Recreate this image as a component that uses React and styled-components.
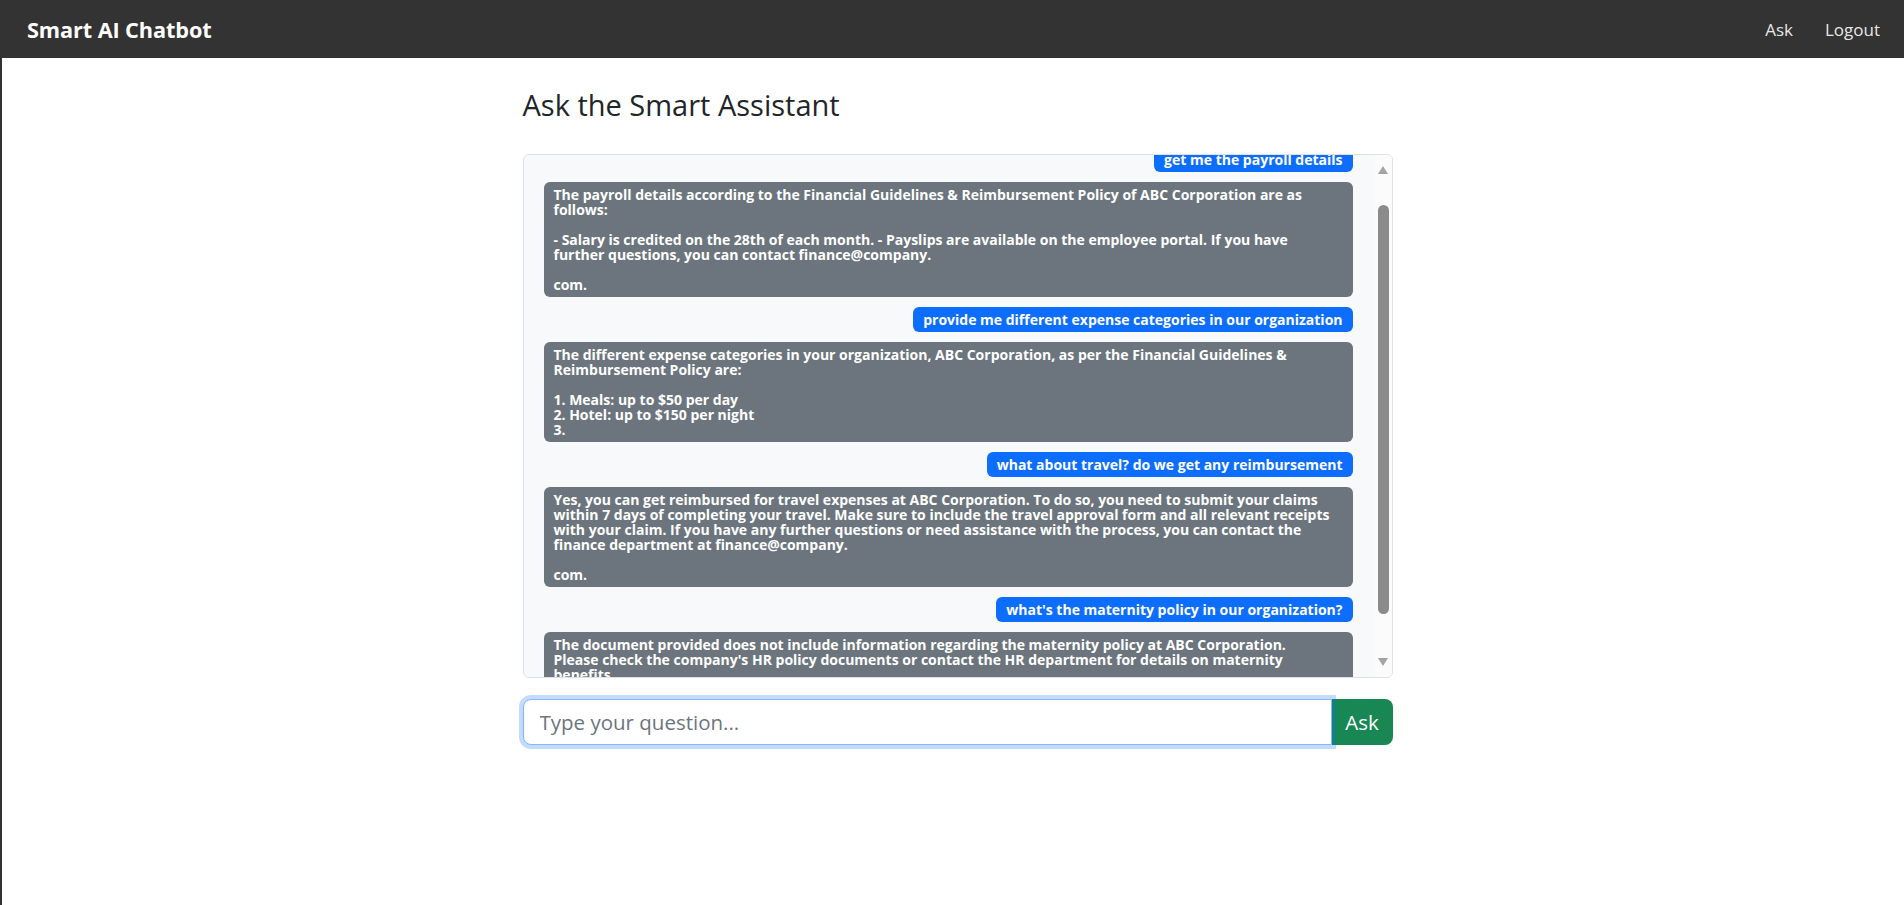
import React, { useLayoutEffect, useRef } from "react";
import styled, { createGlobalStyle } from "styled-components";

const Global = createGlobalStyle`
  html, body { margin: 0; padding: 0; background: #fff; }
  body {
    font-family: "Open Sans", "Noto Sans", sans-serif;
    color: #212529;
  }
  * { box-sizing: border-box; }
`;

const Page = styled.div`
  min-height: 100vh;
  border-left: 2px solid #333;
`;

const NavBar = styled.nav`
  height: 58px;
  background: #333333;
  display: flex;
  align-items: center;
  justify-content: space-between;
  padding: 0 24px 0 25px;
`;

const Brand = styled.a`
  font-family: "Open Sans", sans-serif;
  font-weight: 700;
  font-size: 21.7px;
  color: #fff;
  text-decoration: none;
  letter-spacing: -0.1px;
`;

const NavLinks = styled.div`
  display: flex;
  align-items: center;
  gap: 32px;
`;

const NavLink = styled.a`
  font-size: 17px;
  color: rgba(255, 255, 255, 0.9);
  text-decoration: none;
`;

const Main = styled.main`
  padding-left: 9px;
`;

const Container = styled.div`
  width: 870px;
  margin: 0 auto;
  padding-top: 30px;
`;

const Title = styled.h3`
  margin: 0 0 31px;
  font-size: 29px;
  font-weight: 500;
  line-height: 1.2;
  color: #212529;
`;

const ChatBox = styled.div`
  height: 524px;
  border: 1px solid #dee2e6;
  border-radius: 6px;
  background: #f8f9fa;
  display: flex;
  overflow: hidden;
`;

const Messages = styled.div`
  flex: 1;
  overflow: hidden;
  padding: 12px 22px 12px 20px;
  display: flex;
  flex-direction: column;
  gap: 10px;
`;

const Bubble = styled.div`
  align-self: ${(p) => (p.$user ? "flex-end" : "stretch")};
  background: ${(p) => (p.$user ? "#0d6efd" : "#6c757d")};
  color: #fff;
  font-weight: 700;
  font-size: 14px;
  line-height: 15px;
  padding: 5px 10px;
  border-radius: 6px;
  white-space: pre-wrap;
  flex-shrink: 0;
`;

const ScrollBar = styled.div`
  width: 17px;
  flex-shrink: 0;
  background: #fbfbfb;
  display: flex;
  flex-direction: column;
  align-items: center;
`;

const ArrowBtn = styled.div`
  height: 30px;
  width: 100%;
  display: flex;
  align-items: center;
  justify-content: center;
`;

const Triangle = styled.span`
  width: 0;
  height: 0;
  border-left: 5px solid transparent;
  border-right: 5px solid transparent;
  ${(p) =>
    p.$down
      ? "border-top: 8px solid #a3a3a3;"
      : "border-bottom: 8px solid #a3a3a3;"}
`;

const Track = styled.div`
  flex: 1;
  width: 100%;
  display: flex;
  justify-content: center;
`;

const Thumb = styled.div`
  margin-top: 20px;
  width: 11px;
  height: 409px;
  border-radius: 6px;
  background: #8b8b8b;
`;

const InputGroup = styled.form`
  margin-top: 21px;
  display: flex;
  height: 46px;
`;

const Input = styled.input`
  flex: 1;
  position: relative;
  z-index: 1;
  border: 1px solid #86b7fe;
  border-radius: 8px 0 0 8px;
  box-shadow: 0 0 0 4px rgba(13, 110, 253, 0.25);
  padding: 0 16px;
  font-family: "Open Sans", sans-serif;
  font-size: 20.5px;
  color: #212529;
  outline: none;
  background: #fff;
  &::placeholder {
    color: #6c757d;
  }
`;

const AskButton = styled.button`
  width: 61px;
  border: none;
  border-radius: 0 8px 8px 0;
  background: #198754;
  color: #fff;
  font-family: "Open Sans", sans-serif;
  font-size: 20.5px;
  padding: 0;
  cursor: pointer;
`;

const messages = [
  { user: true, text: "get me the payroll details" },
  {
    user: false,
    text:
      "The payroll details according to the Financial Guidelines & Reimbursement Policy of ABC Corporation are as\nfollows:\n\n- Salary is credited on the 28th of each month. - Payslips are available on the employee portal. If you have\nfurther questions, you can contact finance@company.\n\ncom.",
  },
  { user: true, text: "provide me different expense categories in our organization" },
  {
    user: false,
    text:
      "The different expense categories in your organization, ABC Corporation, as per the Financial Guidelines &\nReimbursement Policy are:\n\n1. Meals: up to $50 per day\n2. Hotel: up to $150 per night\n3.",
  },
  { user: true, text: "what about travel? do we get any reimbursement" },
  {
    user: false,
    text:
      "Yes, you can get reimbursed for travel expenses at ABC Corporation. To do so, you need to submit your claims\nwithin 7 days of completing your travel. Make sure to include the travel approval form and all relevant receipts\nwith your claim. If you have any further questions or need assistance with the process, you can contact the\nfinance department at finance@company.\n\ncom.",
  },
  { user: true, text: "what's the maternity policy in our organization?" },
  {
    user: false,
    text:
      "The document provided does not include information regarding the maternity policy at ABC Corporation.\nPlease check the company's HR policy documents or contact the HR department for details on maternity\nbenefits.",
  },
];

export default function App() {
  const listRef = useRef(null);

  useLayoutEffect(() => {
    if (listRef.current) listRef.current.scrollTop = 20;
  }, []);

  return (
    <Page>
      <Global />
      <NavBar>
        <Brand href="#">Smart AI Chatbot</Brand>
        <NavLinks>
          <NavLink href="#">Ask</NavLink>
          <NavLink href="#">Logout</NavLink>
        </NavLinks>
      </NavBar>
      <Main>
        <Container>
          <Title>Ask the Smart Assistant</Title>
          <ChatBox>
            <Messages ref={listRef}>
              {messages.map((m, i) => (
                <Bubble key={i} $user={m.user}>
                  {m.text}
                </Bubble>
              ))}
            </Messages>
            <ScrollBar>
              <ArrowBtn>
                <Triangle />
              </ArrowBtn>
              <Track>
                <Thumb />
              </Track>
              <ArrowBtn>
                <Triangle $down />
              </ArrowBtn>
            </ScrollBar>
          </ChatBox>
          <InputGroup onSubmit={(e) => e.preventDefault()}>
            <Input placeholder="Type your question..." />
            <AskButton type="submit">Ask</AskButton>
          </InputGroup>
        </Container>
      </Main>
    </Page>
  );
}
